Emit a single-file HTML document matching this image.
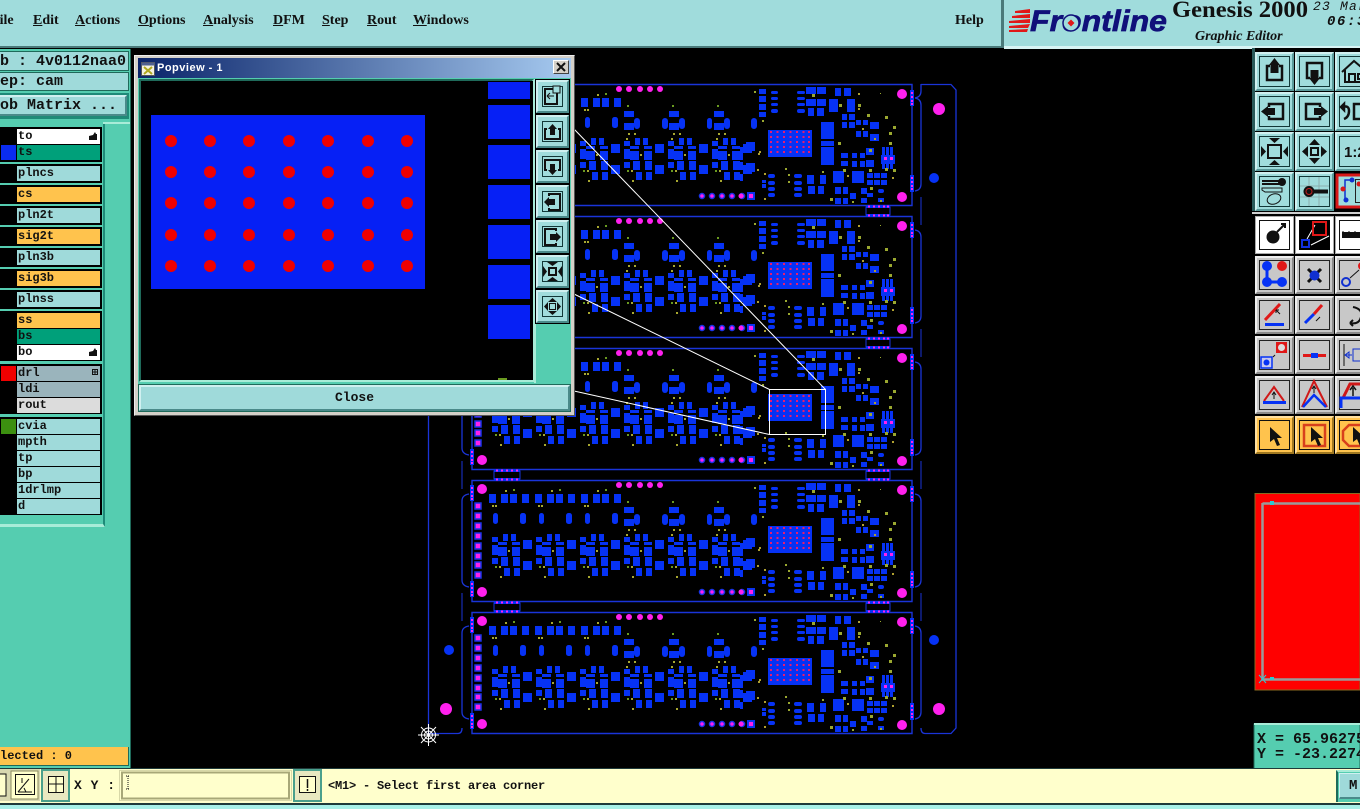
<!DOCTYPE html>
<html><head><meta charset="utf-8"><title>Genesis 2000</title>
<style>
html,body{margin:0;padding:0;background:#000;}
body{width:1360px;height:809px;position:relative;overflow:hidden;font-family:"Liberation Mono",monospace;}
.a{position:absolute;box-sizing:border-box;}
.m{position:absolute;top:12px;font:bold 14px/16px "Liberation Serif",serif;color:#111;white-space:nowrap;}
.m u{text-decoration:underline;}
.l{position:absolute;left:17px;width:82px;height:15px;background:#9fdada;font:bold 12px/14px "Liberation Mono",monospace;color:#111;padding-left:1px;white-space:nowrap;overflow:hidden;}
.g{position:absolute;left:0;width:102px;background:#000;}
.y{background:#ffc34d}.gr{background:#00a07a}.w{background:#fff}.s{background:#9ab4bc}.c{background:#dcdcdc}
.t{position:absolute;white-space:pre;font-weight:bold;color:#111;}
</style></head><body>

<!-- PCB canvas -->
<svg class="a" style="left:0;top:0" width="1360" height="809" viewBox="0 0 1360 809">
<defs>
<g id="cl" fill="#0632f5">
<rect x="492" y="57" width="6" height="5"/><rect x="503" y="54" width="5" height="7"/><rect x="511" y="54" width="5" height="7"/>
<rect x="492" y="65" width="6" height="10"/><rect x="498" y="62" width="9" height="3"/><rect x="498" y="67" width="9" height="9"/>
<rect x="512" y="62" width="8" height="3"/><rect x="512" y="67" width="8" height="9"/>
<rect x="492" y="78" width="6" height="6"/><rect x="501" y="77" width="7" height="9"/><rect x="513" y="77" width="7" height="9"/>
<rect x="523" y="60" width="9" height="9"/><rect x="523" y="81" width="9" height="9"/>
<rect x="504" y="88" width="6" height="8"/><rect x="514" y="88" width="6" height="8"/>
<rect x="508" y="70" width="2" height="2" fill="#a8a830"/><rect x="499" y="86" width="2" height="2" fill="#a8a830"/><rect x="495" y="86" width="2" height="2" fill="#6a9a20"/><rect x="500" y="96" width="2" height="2" fill="#a8a830"/>
</g>
<g id="r4" fill="#0632f5">
<rect x="489" y="14" width="7" height="9"/><rect x="501" y="14" width="7" height="9"/><rect x="510" y="14" width="7" height="9"/><rect x="522" y="14" width="7" height="9"/>
<rect x="493" y="33" width="5" height="11" rx="2.5"/><rect x="520" y="33" width="6" height="11" rx="2.5"/>
<rect x="492" y="25" width="2" height="2" fill="#a8a830"/><rect x="505" y="10" width="2" height="2" fill="#a8a830"/><rect x="513" y="9" width="2" height="2" fill="#6a9a20"/><rect x="495" y="25" width="2" height="2" fill="#a8a830"/>
</g>
<g id="o3" fill="#0632f5">
<rect x="624" y="27" width="10" height="6"/><rect x="624" y="39" width="10" height="7"/><rect x="634" y="34" width="6" height="11" rx="3"/>
<rect x="627" y="21" width="2" height="2" fill="#6a9a20"/><rect x="628" y="49" width="2" height="2" fill="#a8a830"/><rect x="634" y="49" width="2" height="2" fill="#a8a830"/>
<rect x="626" y="54" width="2" height="2" fill="#a8a830"/>
</g>
<g id="br">
<path d="M866 122.500V131.500M890 122.500V131.500M494 122.500V131.500M520 122.500V131.500" stroke="#1a34d8" fill="none"/>
<g fill="#0632f5"><rect x="866" y="121" width="24" height="3"/><rect x="866" y="130" width="24" height="3"/><rect x="494" y="121" width="26" height="3"/><rect x="494" y="130" width="26" height="3"/></g>
<path fill="#ff20ee" d="M868 121.500h2v2h-2zM873 121.500h2v2h-2zM878 121.500h2v2h-2zM883 121.500h2v2h-2zM887 121.500h2v2h-2zM868 130.500h2v2h-2zM873 130.500h2v2h-2zM878 130.500h2v2h-2zM883 130.500h2v2h-2zM887 130.500h2v2h-2z"/>
<path fill="#ff20ee" d="M496 121.500h2v2h-2zM501 121.500h2v2h-2zM506 121.500h2v2h-2zM511 121.500h2v2h-2zM516 121.500h2v2h-2zM496 130.500h2v2h-2zM501 130.500h2v2h-2zM506 130.500h2v2h-2zM511 130.500h2v2h-2zM516 130.500h2v2h-2z"/>
</g>
<g id="p">
<path d="M472 .5H912V121.500H472Z" fill="none" stroke="#1a34d8" stroke-width="1.400"/>
<g fill="#0632f5">
<rect x="759" y="5" width="7" height="5"/><rect x="759" y="12" width="7" height="6"/><rect x="759" y="20" width="7" height="6"/><rect x="759" y="28" width="7" height="5"/>
<rect x="771" y="7" width="7" height="3" rx="1.5"/><rect x="771" y="13" width="7" height="3" rx="1.5"/><rect x="771" y="19" width="7" height="3" rx="1.5"/><rect x="771" y="25" width="7" height="4" rx="2"/>
<rect x="797" y="7" width="8" height="3" rx="1.5"/><rect x="797" y="13" width="8" height="3" rx="1.5"/><rect x="797" y="19" width="8" height="3" rx="1.5"/><rect x="797" y="25" width="8" height="4" rx="2"/>
<rect x="806" y="3" width="10" height="7"/><rect x="817" y="3" width="9" height="7"/><rect x="806" y="15" width="10" height="7"/><rect x="817" y="15" width="9" height="7"/>
<rect x="808" y="24" width="6" height="8"/><rect x="817" y="24" width="7" height="8"/>
<rect x="835" y="4" width="6" height="8"/><rect x="844" y="4" width="7" height="8"/>
<rect x="829" y="15" width="9" height="13"/><rect x="847" y="15" width="8" height="13"/>
<rect x="842" y="30" width="5" height="6"/><rect x="849" y="30" width="6" height="6"/><rect x="842" y="38" width="5" height="6"/><rect x="849" y="38" width="6" height="6"/>
<rect x="856" y="36" width="5" height="5"/><rect x="863" y="36" width="5" height="5"/><rect x="870" y="38" width="9" height="7"/>
<rect x="856" y="47" width="5" height="6"/><rect x="863" y="47" width="5" height="6"/><rect x="870" y="50" width="9" height="7"/>
<rect x="821" y="38" width="13" height="17"/><rect x="821" y="57" width="13" height="5"/><rect x="821" y="63" width="13" height="18"/>
<rect x="751" y="34" width="6" height="11" rx="3"/><rect x="746" y="58" width="9" height="9"/><rect x="746" y="79" width="9" height="9"/>
<rect x="740" y="63" width="3" height="13"/><rect x="740" y="78" width="3" height="8"/><rect x="740" y="90" width="3" height="7"/>
<rect x="881" y="71" width="14" height="9"/><rect x="882" y="63" width="3" height="8"/><rect x="886" y="63" width="3" height="8"/><rect x="890" y="63" width="3" height="8"/><rect x="882" y="80" width="3" height="5"/><rect x="886" y="80" width="3" height="5"/><rect x="890" y="80" width="3" height="5"/>
<rect x="866" y="64" width="8" height="7"/><rect x="841" y="69" width="7" height="5"/><rect x="841" y="77" width="7" height="5"/>
<rect x="852" y="69" width="5" height="5"/><rect x="860" y="69" width="5" height="5"/><rect x="852" y="77" width="5" height="6"/><rect x="860" y="77" width="5" height="6"/><rect x="866" y="76" width="8" height="7"/>
<rect x="833" y="87" width="11" height="12"/><rect x="852" y="87" width="12" height="12"/>
<rect x="867" y="89" width="6" height="5"/><rect x="874" y="89" width="6" height="5"/><rect x="881" y="89" width="6" height="5"/><rect x="867" y="96" width="6" height="5"/><rect x="874" y="96" width="6" height="5"/><rect x="881" y="96" width="6" height="5"/>
<rect x="807" y="91" width="7" height="9"/><rect x="820" y="91" width="6" height="9"/><rect x="808" y="102" width="7" height="8"/><rect x="818" y="102" width="6" height="8"/>
<rect x="768" y="90" width="7" height="4" rx="2"/><rect x="768" y="97" width="7" height="4" rx="2"/><rect x="768" y="103" width="7" height="4" rx="2"/><rect x="768" y="109" width="7" height="4" rx="2"/>
<rect x="794" y="90" width="8" height="4" rx="2"/><rect x="794" y="97" width="8" height="4" rx="2"/><rect x="794" y="103" width="8" height="4" rx="2"/><rect x="794" y="109" width="8" height="4" rx="2"/>
<rect x="762" y="96" width="4" height="3"/><rect x="762" y="100" width="4" height="4"/>
<rect x="835" y="103" width="6" height="7"/><rect x="843" y="103" width="5" height="7"/><rect x="835" y="114" width="6" height="6"/><rect x="843" y="114" width="5" height="6"/>
<rect x="850" y="109" width="6" height="6"/><rect x="861" y="104" width="6" height="6"/><rect x="861" y="114" width="6" height="5"/><rect x="867" y="109" width="6" height="4"/>
<rect x="878" y="105" width="6" height="4" rx="2"/><rect x="878" y="114" width="6" height="4"/>
<rect x="747" y="108" width="8" height="8"/><rect x="768" y="46" width="44" height="27"/>
<rect x="470" y="5" width="4" height="16"/><rect x="470" y="101" width="4" height="16"/>
<rect x="910" y="6" width="4" height="16"/><rect x="910" y="91" width="4" height="17"/>
</g>
<!-- BGA dots -->
<g fill="#e81c70">
<path d="M770 47h2v2h-2zM776.500 47h2v2h-2zM783 47h2v2h-2zM789.500 47h2v2h-2zM796 47h2v2h-2zM802.500 47h2v2h-2zM808 47h2v2h-2z"/>
<path d="M770 52h2v2h-2zM776.500 52h2v2h-2zM783 52h2v2h-2zM789.500 52h2v2h-2zM796 52h2v2h-2zM802.500 52h2v2h-2zM808 52h2v2h-2z"/>
<path d="M770 57h2v2h-2zM776.500 57h2v2h-2zM783 57h2v2h-2zM789.500 57h2v2h-2zM796 57h2v2h-2zM802.500 57h2v2h-2zM808 57h2v2h-2z"/>
<path d="M770 62h2v2h-2zM776.500 62h2v2h-2zM783 62h2v2h-2zM789.500 62h2v2h-2zM796 62h2v2h-2zM802.500 62h2v2h-2zM808 62h2v2h-2z"/>
<path d="M770 67h2v2h-2zM776.500 67h2v2h-2zM783 67h2v2h-2zM789.500 67h2v2h-2zM796 67h2v2h-2zM802.500 67h2v2h-2zM808 67h2v2h-2z"/>
</g>
<!-- clusters -->
<use href="#cl"/><use href="#cl" x="44"/><use href="#cl" x="88"/><use href="#cl" x="132"/><use href="#cl" x="176"/><use href="#cl" x="220"/>
<use href="#r4"/><use href="#r4" x="46"/><use href="#r4" x="92"/>
<use href="#o3"/><use href="#o3" x="45"/><use href="#o3" x="90"/>
<g fill="#0632f5"><rect x="662" y="34" width="6" height="11" rx="3"/><rect x="707" y="34" width="5" height="11" rx="2.500"/></g>
<!-- magenta -->
<g fill="#ff20ee">
<circle cx="619" cy="5" r="3"/><circle cx="629" cy="5" r="3"/><circle cx="640" cy="5" r="3"/><circle cx="650" cy="5" r="3"/><circle cx="660" cy="5" r="3"/>
<circle cx="902" cy="10" r="5"/><circle cx="902" cy="113" r="5"/><circle cx="482" cy="9" r="5"/><circle cx="482" cy="112" r="5"/>
</g>
<g fill="#ff20ee" stroke="#1a34e8" stroke-width="1.500">
<circle cx="702" cy="112" r="2.500"/><circle cx="712" cy="112" r="2.500"/><circle cx="722" cy="112" r="2.500"/><circle cx="732" cy="112" r="2.500"/><circle cx="742" cy="112" r="2.500"/><circle cx="751" cy="112" r="2.500"/>
<rect x="475" y="23" width="6" height="6"/><rect x="475" y="33" width="6" height="6"/><rect x="475" y="43" width="6" height="6"/><rect x="475" y="53" width="6" height="6"/><rect x="475" y="63" width="6" height="6"/><rect x="475" y="73" width="6" height="6"/><rect x="475" y="82" width="6" height="6"/><rect x="475" y="92" width="6" height="6"/>
</g>
<g fill="#ff20ee">
<path d="M471 7h2v2h-2zM471 11h2v2h-2zM471 15h2v2h-2zM471 18h2v2h-2zM471 103h2v2h-2zM471 107h2v2h-2zM471 111h2v2h-2zM471 114h2v2h-2z"/>
<path d="M911 8h2v2h-2zM911 12h2v2h-2zM911 16h2v2h-2zM911 19h2v2h-2zM911 93h2v2h-2zM911 97h2v2h-2zM911 101h2v2h-2zM911 104h2v2h-2z"/>
<path d="M884 73h3v3h-3zM890 73h3v3h-3zM749 110h4v4h-4z"/>
</g>
<circle cx="741" cy="112" r="2.500" fill="#ff20ee"/>
<!-- olive dots -->
<g fill="#9aa830">
<path d="M754 7h2v2h-2zM762 36h2v2h-2zM812 10h3v3h-3zM839 20h3v3h-3zM858 20h3v3h-3zM867 30h3v3h-3zM885 32h3v3h-3zM893 42h3v3h-3zM889 48h3v3h-3zM889 58h3v3h-3zM869 65h3v3h-3zM838 58h3v3h-3zM880 9h1v1h-1zM843 85h3v3h-3zM869 85h3v3h-3zM885 84h3v3h-3zM893 85h3v3h-3zM785 84h2v2h-2zM822 87h2v2h-2zM788 90h2v2h-2zM788 97h2v2h-2zM870 103h3v3h-3zM830 114h3v3h-3zM852 117h2v2h-2zM880 116h2v2h-2z"/>
<path d="M759 67h2v2h-2zM757 85h2v2h-2zM764 89h2v2h-2zM764 114h2v2h-2zM858 24h2v2h-2zM862 44h2v2h-2zM874 54h2v2h-2zM892 93h2v2h-2zM847 91h2v2h-2zM858 9h2v2h-2zM758 69h2v2h-2z" fill="#b0a030"/>
</g>
</g>
</defs>
<rect width="1360" height="809" fill="#000"/>
<use href="#p" y="84"/><use href="#p" y="216"/><use href="#p" y="348"/><use href="#p" y="480"/><use href="#p" y="612"/>
<use href="#br" y="84"/><use href="#br" y="216"/><use href="#br" y="348"/><use href="#br" y="480"/>
<!-- outline -->
<g fill="none" stroke="#1a34d8" stroke-width="1.300">
<path d="M428.500 84V733.500H458Q462 733.500 462 728M921 728Q921 733.500 925 733.500H951L956 728V90L951 84.500H921"/>
<path d="M921 84V91Q921 97 915 98"/>
<path d="M462 105V184Q462 190 469 191M462 105Q462 99 469 98M462 237V316Q462 322 469 323M462 237Q462 231 469 230M462 369V448Q462 454 469 455M462 369Q462 363 469 362M462 501V580Q462 586 469 587M462 501Q462 495 469 494M462 633V712Q462 718 469 719M462 633Q462 627 469 626"/>
<path d="M921 105V184Q921 190 915 191M921 105Q921 99 915 98M921 237V316Q921 322 915 323M921 237Q921 231 915 230M921 369V448Q921 454 915 455M921 369Q921 363 915 362M921 501V580Q921 586 915 587M921 501Q921 495 915 494M921 633V712Q921 718 915 719M921 633Q921 627 915 626"/>
<path d="M921 197V225M921 329V357M921 461V489M921 593V621M462 197V225M462 329V357M462 461V489M462 593V621" stroke-width="1"/>
</g>
<circle cx="939" cy="109" r="6" fill="#ff20ee"/><circle cx="939" cy="709" r="6" fill="#ff20ee"/><circle cx="446" cy="709" r="6" fill="#ff20ee"/>
<circle cx="934" cy="178" r="5" fill="#0632f5"/><circle cx="934" cy="640" r="5" fill="#0632f5"/><circle cx="449" cy="650" r="5" fill="#0632f5"/>
<!-- zoom lines -->
<g fill="none" stroke="#fff" stroke-width="1">
<rect x="769.500" y="389.500" width="56" height="45"/>
<path d="M574 129L825.500 389.500M574 294L769.500 389.500M574 391L769.500 434.500"/>
</g>
<!-- spider cursor -->
<g stroke="#fff" stroke-width="1" fill="none"><circle cx="428.500" cy="735" r="7"/><circle cx="428.500" cy="735" r="4"/><path d="M418 735H439M428.500 724V746M421 727L436 743M421 743L436 727"/></g>
</svg>

<!-- Top menu -->
<div class="a" style="left:0;top:0;width:1360px;height:48px;background:#a0dcdc;border-bottom:2px solid #4a7a7a"></div>
<div class="a" style="left:1001px;top:0;width:3px;height:48px;background:#4a7a7a"></div>
<div class="a" style="left:1004px;top:46px;width:356px;height:3px;background:#d8f4f4"></div>
<div class="m" style="left:-9px;top:13px"><u>F</u>ile</div>
<div class="m" style="left:33px;top:13px"><u>E</u>dit</div>
<div class="m" style="left:75px;top:13px"><u>A</u>ctions</div>
<div class="m" style="left:138px;top:13px"><u>O</u>ptions</div>
<div class="m" style="left:203px;top:13px"><u>A</u>nalysis</div>
<div class="m" style="left:273px;top:13px"><u>D</u>FM</div>
<div class="m" style="left:322px;top:13px"><u>S</u>tep</div>
<div class="m" style="left:367px;top:13px"><u>R</u>out</div>
<div class="m" style="left:413px;top:13px"><u>W</u>indows</div>
<div class="m" style="left:955px;top:13px">Help</div>
<svg class="a" style="left:1004px;top:0" width="356" height="46" viewBox="0 0 356 46">
<g fill="#e01818"><path d="M26 9L11 11V13H26ZM26 14L8 16V18H26ZM26 19L5 21V23H26ZM26 24L5 26V28H24ZM24 29L5 30V32H23Z"/></g>
<text x="26" y="31" font-family="Liberation Sans" font-weight="bold" font-style="italic" font-size="30" fill="#10107a" stroke="#10107a" stroke-width=".7" textLength="137" lengthAdjust="spacingAndGlyphs">Frontline</text>
<circle cx="67" cy="23" r="8" fill="#a0dcdc" stroke="#10107a" stroke-width="1.500"/>
<path d="M67 19.500L70.500 23 67 26.500 63.500 23Z" fill="#e01818"/>
<text x="168" y="17" font-family="Liberation Serif" font-weight="bold" font-size="23" fill="#111" textLength="136" lengthAdjust="spacingAndGlyphs">Genesis 2000</text>
<text x="191" y="40" font-family="Liberation Serif" font-weight="bold" font-style="italic" font-size="14" fill="#111">Graphic Editor</text>
<text x="309" y="10" font-family="Liberation Mono" font-style="italic" font-size="13" fill="#111" letter-spacing="1.200">23 Mar</text>
<text x="323" y="25" font-family="Liberation Mono" font-style="italic" font-weight="bold" font-size="14" fill="#111" letter-spacing="1.600">06:38</text>
</svg>

<!-- Left panel -->
<div class="a" style="left:0;top:49px;width:131px;height:721px;background:#55cdb0;border-right:1px solid #1f6a5a"></div>
<div class="a" style="left:0;top:51px;width:129px;height:20px;background:#9fdada;border:1px solid #1f6a5a;border-left:0"></div>
<div class="a" style="left:0;top:72px;width:129px;height:19px;background:#9fdada;border:1px solid #1f6a5a;border-left:0"></div>
<div class="a" style="left:0;top:93px;width:129px;height:26px;background:#1f8a78"></div>
<div class="a" style="left:0;top:95px;width:127px;height:21px;background:#9fdada;border-top:2px solid #d0f0f0;border-right:2px solid #4a8a8a;border-bottom:2px solid #4a8a8a"></div>
<div class="t" style="left:0;top:53px;font-size:15px;line-height:18px">b : 4v0112naa0</div>
<div class="t" style="left:0;top:73px;font-size:15px;line-height:18px">ep: cam</div>
<div class="t" style="left:0;top:97px;font-size:15px;line-height:18px">ob Matrix ...</div>
<div class="a" style="left:0;top:122px;width:105px;height:405px;background:#55cdb0;border-right:2px solid #1f8a78;border-bottom:3px solid #a8ecd8"></div>
<div class="a" style="left:103px;top:122px;width:27px;height:2px;background:#a8ecd8"></div>

<div class="g" style="top:127px;height:35px"></div><div class="g" style="top:164px;height:19px"></div><div class="g" style="top:185px;height:19px"></div><div class="g" style="top:206px;height:19px"></div><div class="g" style="top:227px;height:19px"></div><div class="g" style="top:248px;height:19px"></div><div class="g" style="top:269px;height:19px"></div><div class="g" style="top:290px;height:19px"></div><div class="g" style="top:311px;height:50px"></div><div class="g" style="top:364px;height:50px"></div><div class="g" style="top:417px;height:98px"></div>
<div class="a" style="left:1px;top:145px;width:15px;height:15px;background:#0a2cf0"></div>
<div class="a" style="left:1px;top:366px;width:15px;height:15px;background:#f00000"></div>
<div class="a" style="left:1px;top:419px;width:15px;height:15px;background:#3c9010"></div>

<div class="l w" style="top:129px">to</div>
<div class="l gr" style="top:145px">ts</div>
<div class="l" style="top:166px">plncs</div>
<div class="l y" style="top:187px">cs</div>
<div class="l" style="top:208px">pln2t</div>
<div class="l y" style="top:229px">sig2t</div>
<div class="l" style="top:250px">pln3b</div>
<div class="l y" style="top:271px">sig3b</div>
<div class="l" style="top:292px">plnss</div>
<div class="l y" style="top:313px">ss</div>
<div class="l gr" style="top:329px">bs</div>
<div class="l w" style="top:345px">bo</div>
<div class="l s" style="top:366px">drl</div>
<div class="l s" style="top:382px">ldi</div>
<div class="l c" style="top:398px">rout</div>
<div class="l" style="top:419px">cvia</div>
<div class="l" style="top:435px">mpth</div>
<div class="l" style="top:451px">tp</div>
<div class="l" style="top:467px">bp</div>
<div class="l" style="top:483px">1drlmp</div>
<div class="l" style="top:499px">d</div>
<svg class="a" style="left:88px;top:131px" width="10" height="10" viewBox="0 0 10 10"><path d="M1 9V5L5 4 7 1 8 3 9 3V9Z" fill="#111"/></svg>
<svg class="a" style="left:88px;top:347px" width="10" height="10" viewBox="0 0 10 10"><path d="M1 9V5L5 4 7 1 8 3 9 3V9Z" fill="#111"/></svg>
<svg class="a" style="left:92px;top:369px" width="6" height="6" viewBox="0 0 6 6"><path d="M.5.5h5v5h-5zM3 0v6M0 3h6" fill="none" stroke="#111"/></svg>

<div class="a" style="left:0;top:747px;width:129px;height:19px;background:#ffc34d;border-right:1px solid #1f6a5a;border-bottom:1px solid #1f6a5a"></div>
<div class="t" style="left:0;top:748px;font-size:12px;line-height:16px">lected : 0</div>

<!-- Right toolbar -->
<svg class="a" style="left:1252px;top:48px" width="108" height="722" viewBox="1252 48 108 722" font-family="Liberation Sans">
<defs>
<g id="tb"><rect width="39" height="39" fill="#5a9a9a"/><path d="M0 39V0H39L37 2H2V37Z" fill="#d0f0f0"/><rect x="2" y="2" width="35" height="35" fill="#a0dcdc"/><rect x="4.500" y="4.500" width="30" height="30" fill="#a0dcdc" stroke="#123838"/></g>
<g id="gb"><rect width="39" height="38" fill="#8a8a8a"/><path d="M0 38V0H39L37 2H2V36Z" fill="#eeeeee"/><rect x="2" y="2" width="35" height="34" fill="#c8c8c8"/><rect x="4.500" y="4.500" width="30" height="29" fill="#c8c8c8" stroke="#222"/></g>
<g id="wb"><rect width="39" height="38" fill="#aaa"/><rect x="1" y="1" width="37" height="36" fill="#fff"/><rect x="4.500" y="4.500" width="30" height="29" fill="#fff" stroke="#111"/></g>
<g id="ob"><rect width="39" height="38" fill="#a07820"/><path d="M0 38V0H39L37 2H2V36Z" fill="#ffe0a0"/><rect x="2" y="2" width="35" height="34" fill="#ffc34d"/><rect x="4.500" y="4.500" width="30" height="29" fill="#ffc34d" stroke="#111"/></g>
<g id="ic-up" fill="none" stroke="#111" stroke-width="2.500"><path d="M15 14H12V28H27V14H24"/><path d="M19.500 6L25 13H23.500V21H15.500V13H14Z" fill="#111" stroke="none"/></g>
<g id="ic-dn" fill="none" stroke="#111" stroke-width="2.500"><path d="M15 26H12V11H27V26H24"/><path d="M19.500 33L25 26H23.500V18H15.500V26H14Z" fill="#111" stroke="none"/></g>
<g id="ic-lf" fill="none" stroke="#111" stroke-width="2.500"><path d="M14 15V12H28V27H14V24"/><path d="M6 19.500L13 14V16H20V23H13V25Z" fill="#111" stroke="none"/></g>
<g id="ic-rt" fill="none" stroke="#111" stroke-width="2.500"><path d="M25 15V12H11V27H25V24"/><path d="M33 19.500L26 14V16H19V23H26V25Z" fill="#111" stroke="none"/></g>
<g id="ic-fit"><rect x="13" y="13" width="13" height="13" fill="none" stroke="#111" stroke-width="2"/><path d="M19.500 11L14 6H25ZM19.500 28L14 33H25ZM11 19.500L6 14V25ZM28 19.500L33 14V25Z" fill="#111"/></g>
<g id="ic-cen"><rect x="16" y="16" width="7" height="7" fill="none" stroke="#111" stroke-width="2"/><path d="M19.500 7L14 13H25ZM19.500 32L14 26H25ZM7 19.500L13 14V25ZM32 19.500L26 14V25Z" fill="#111"/></g>
</defs>
<rect x="1252" y="48" width="108" height="722" fill="#000"/>
<rect x="1252" y="48" width="3" height="163" fill="#2a5a5a"/>
<rect x="1252" y="212" width="108" height="2" fill="#d0d0d0"/>
<!-- row1 -->
<g transform="translate(1255 52)"><use href="#tb"/><use href="#ic-up"/></g>
<g transform="translate(1295 52)"><use href="#tb"/><use href="#ic-dn"/></g>
<g transform="translate(1335 52)"><use href="#tb"/><path d="M7 20L19 9 32 20M10 18V30H30V18M14 30V22H20V30M23 22H28V27H23ZM27 8l3 2" fill="none" stroke="#111" stroke-width="2"/></g>
<g transform="translate(1255 92)"><use href="#tb"/><use href="#ic-lf"/></g>
<g transform="translate(1295 92)"><use href="#tb"/><use href="#ic-rt"/></g>
<g transform="translate(1335 92)"><use href="#tb"/><path d="M8 15Q14 13 14 19T9 27M6 15L9 12V18Z" fill="none" stroke="#111" stroke-width="2.500"/><path d="M31 12H19V27H31" fill="none" stroke="#111" stroke-width="2.500"/></g>
<g transform="translate(1255 132)"><use href="#tb"/><use href="#ic-fit"/></g>
<g transform="translate(1295 132)"><use href="#tb"/><use href="#ic-cen"/></g>
<g transform="translate(1335 132)"><use href="#tb"/><text x="9" y="25" font-size="15" font-weight="bold" font-family="Liberation Sans" fill="#111">1:2</text></g>
<g transform="translate(1255 172)"><use href="#tb"/><path d="M7 9H26M7 12H26" stroke="#111" stroke-width="2"/><circle cx="27" cy="10" r="4" fill="#111"/><path d="M7 16H27V20H10L7 18Z" fill="#a0dcdc" stroke="#111"/><ellipse cx="19" cy="27" rx="7" ry="5" fill="none" stroke="#111" transform="rotate(-20 19 27)"/></g>
<g transform="translate(1295 172)"><use href="#tb"/><path d="M14 5V34M24 5V34M5 14H34M5 25H34" stroke="#8cb0b0"/><rect x="18" y="17.500" width="15" height="4" fill="#111"/><circle cx="14" cy="19.500" r="5.500" fill="#111"/><circle cx="14" cy="19.500" r="3" fill="none" stroke="#c02020"/></g>
<g transform="translate(1335 172)"><rect width="25" height="38" fill="#000"/><rect x="2" y="3" width="40" height="32" fill="#a0dcdc" stroke="#d81818" stroke-width="3"/><path d="M17 8H10V17M10 17V28" stroke="#1030d0" stroke-width="1.500" fill="none"/><circle cx="17" cy="8" r="2.500" fill="#1030d0"/><circle cx="8" cy="17" r="2.500" fill="#d81818"/><circle cx="11" cy="28" r="2.500" fill="#1030d0"/><rect x="20.500" y="7.500" width="8" height="23" fill="none" stroke="#222"/><circle cx="24" cy="12" r="2.500" fill="#d81818"/></g>
<!-- white row -->
<g transform="translate(1255 216)"><use href="#wb"/><circle cx="18" cy="21" r="6.500" fill="#111"/><path d="M22 16L30 8M26 8H30V12" stroke="#111" stroke-width="2" fill="none"/></g>
<g transform="translate(1295 216)"><rect width="39" height="38" fill="#aaa"/><rect x="1" y="1" width="37" height="36" fill="#fff"/><rect x="4" y="4" width="31" height="30" fill="#000"/><path d="M12 23L20 9M16 29L34 20" stroke="#fff"/><rect x="18" y="6" width="13" height="13" fill="none" stroke="#e01818" stroke-width="2"/><rect x="7" y="24" width="7" height="7" fill="none" stroke="#1030e0" stroke-width="2"/></g>
<g transform="translate(1335 216)"><use href="#wb"/><rect x="7" y="16" width="25" height="6" fill="#111"/><path d="M8 13V16M11 14V16M14 13V16M17 14V16M20 13V16M23 14V16" stroke="#111" transform="translate(0 2)"/></g>
<!-- gray rows -->
<g transform="translate(1255 256)"><use href="#gb"/><path d="M12 10V26H27" stroke="#0632f5" stroke-width="3" fill="none"/><circle cx="12" cy="10" r="5" fill="#0632f5"/><circle cx="12" cy="26" r="5" fill="#0632f5"/><circle cx="27" cy="26" r="5" fill="#0632f5"/><circle cx="27" cy="10" r="5" fill="#e01818"/></g>
<g transform="translate(1295 256)"><use href="#gb"/><path d="M13 13L26 26M26 13L13 26" stroke="#111" stroke-width="3"/><circle cx="19.500" cy="19.500" r="5" fill="#1030d0"/></g>
<g transform="translate(1335 256)"><use href="#gb"/><circle cx="11" cy="26" r="4" fill="none" stroke="#1030d0" stroke-width="2"/><path d="M15 22L24 14" stroke="#111"/><circle cx="27" cy="10" r="4" fill="#e01818"/></g>
<g transform="translate(1255 296)"><use href="#gb"/><path d="M10 24L25 8" stroke="#e01818" stroke-width="3"/><rect x="10" y="27" width="19" height="3" fill="#0632f5"/><path d="M25 18L21 14M21 14V17M21 14H24" stroke="#111"/></g>
<g transform="translate(1295 296)"><use href="#gb"/><path d="M10 27L19 18" stroke="#0632f5" stroke-width="3"/><path d="M19 18L27 9" stroke="#e01818" stroke-width="3"/><path d="M21 25L25 21" stroke="#111"/></g>
<g transform="translate(1335 296)"><use href="#gb"/><path d="M18 11Q28 13 26 21T15 27M15 27L18 24M15 27L18 30" fill="none" stroke="#111" stroke-width="2"/></g>
<g transform="translate(1255 336)"><use href="#gb"/><rect x="21" y="6" width="11" height="11" fill="#e01818"/><circle cx="26.500" cy="11.500" r="3.500" fill="#ddd"/><rect x="6" y="21" width="11" height="11" fill="#c8c8ee" stroke="#0632f5" stroke-width="1.500"/><circle cx="11.500" cy="26.500" r="3" fill="#0632f5"/><path d="M18 21L20 19" stroke="#111"/></g>
<g transform="translate(1295 336)"><use href="#gb"/><rect x="8" y="18" width="11" height="3" fill="#e01818"/><rect x="23" y="18" width="8" height="3" fill="#e01818"/><rect x="16" y="17" width="7" height="5" fill="#0632f5"/></g>
<g transform="translate(1335 336)"><use href="#gb"/><path d="M9 8V30" stroke="#111"/><path d="M10 19H17" stroke="#1030d0"/><path d="M18 13H27V25H18ZM10 19L14 16V22Z" fill="none" stroke="#1030d0"/></g>
<g transform="translate(1255 376)"><use href="#gb"/><path d="M9 25L19 11 29 25" stroke="#d01818" stroke-width="2" fill="none"/><rect x="8" y="25" width="23" height="3" fill="#0632f5"/><path d="M19 17V23M17 19L19 16 21 19" stroke="#111" fill="none"/></g>
<g transform="translate(1295 376)"><use href="#gb"/><path d="M7 31L19 5 32 31" stroke="#d01818" stroke-width="2" fill="none"/><path d="M8 31L19 19 31 31" stroke="#0632f5" stroke-width="2.500" fill="none"/><path d="M19 11V17M17 13L19 10 21 13" stroke="#111" fill="none"/></g>
<g transform="translate(1335 376)"><use href="#gb"/><path d="M8 22L15 8H29L36 22" stroke="#d01818" stroke-width="3" fill="none"/><path d="M6 32V22H38" stroke="#0632f5" stroke-width="3" fill="none"/><path d="M18 20V12M15 14L18 10 21 14" stroke="#111" stroke-width="1.500" fill="none"/></g>
<g transform="translate(1255 416)"><use href="#ob"/><path id="arrow" d="M15 11V26L19 23 22 30 25 29 22 22 27 22Z" fill="#111"/></g>
<g transform="translate(1295 416)"><use href="#ob"/><rect x="9" y="9" width="21" height="21" fill="none" stroke="#d8401c" stroke-width="2.500"/><use href="#arrow" x="1"/></g>
<g transform="translate(1335 416)"><use href="#ob"/><path d="M14 9H30V30H14L8 24V15Z" fill="none" stroke="#d8401c" stroke-width="2.500"/><use href="#arrow" x="3"/></g>
<!-- red map -->
<rect x="1255" y="493.500" width="105" height="196.500" fill="#ff0000" stroke="#8a6a20"/>
<path d="M1262.500 503.500H1360M1262.500 503V679.500H1360" fill="none" stroke="#9a9a9a" stroke-width="2.500"/>
<path d="M1270 501h4v4h-4zM1270 677h4v3h-4z" fill="#30c8d0"/>
<path d="M1259 675L1266 683M1266 675L1259 683" stroke="#30c8d0"/>
<!-- coords -->
<rect x="1254" y="724" width="106" height="45" fill="#55cdb0" stroke="#1f6a5a"/>
<rect x="1254" y="723" width="106" height="2" fill="#a8ecd8"/>
</svg>
<div class="t" style="left:1257px;top:732px;font-size:15px;line-height:15px">X = 65.96275</div>
<div class="t" style="left:1257px;top:747px;font-size:15px;line-height:15px">Y = -23.2274</div>

<!-- Bottom bar -->
<div class="a" style="left:0;top:768px;width:1360px;height:35px;background:#ffffcc;border-top:1px solid #1f3a3a"></div>
<div class="a" style="left:0;top:803px;width:1360px;height:2px;background:#1f3a3a"></div>
<div class="a" style="left:0;top:805px;width:1360px;height:4px;background:#a8f0e8"></div>
<svg class="a" style="left:0;top:769px" width="330" height="34" viewBox="0 0 330 34">
<rect x="0" y="0" width="9" height="32" fill="#d8d8b0"/><rect x="-5" y="5" width="11" height="22" fill="#ffffcc" stroke="#111"/>
<rect x="9" y="0" width="31" height="32" fill="#d8d8b0"/><rect x="11" y="2" width="27" height="28" fill="#ffffcc" stroke="#8a8a60"/><rect x="15.500" y="5.500" width="19" height="20" fill="#ffffcc" stroke="#111"/>
<path d="M18 23L29 10M18 23H32M22 9L22 14M24 19L26 23" stroke="#111" fill="none"/>
<rect x="41" y="0" width="29" height="33" fill="#4aa08c"/><rect x="43" y="2" width="25" height="29" fill="#e8e8c0"/><rect x="48.500" y="7.500" width="15" height="16" fill="#ffffcc" stroke="#111"/><path d="M48.500 15H63.500M56 7.500V23.500" stroke="#111"/>
<rect x="119.500" y="1.500" width="172" height="30" fill="#ffffcc" stroke="#d8d8a8"/><rect x="122" y="3.500" width="167" height="26" fill="#ffffcc" stroke="#a8a878" stroke-width="2"/>
<path d="M128 7V20M126 7H130M126 20H130" stroke="#111" stroke-dasharray="1 1" fill="none"/>
<rect x="293" y="0" width="29" height="33" fill="#4aa08c"/><rect x="295" y="2" width="25" height="29" fill="#e8e8c0"/><rect x="299.500" y="7.500" width="16" height="16" fill="#ffffcc" stroke="#111"/><path d="M307.500 10V19M307.500 20V22" stroke="#111" stroke-width="1.500"/>
</svg>
<div class="t" style="left:74px;top:778px;font-size:13px;line-height:16px;letter-spacing:.5px">X Y :</div>
<div class="t" style="left:328px;top:778px;font-size:12px;line-height:16px;letter-spacing:-.2px">&lt;M1&gt; - Select first area corner</div>
<div class="a" style="left:1336px;top:770px;width:24px;height:32px;background:#55cdb0;border-left:2px solid #1f6a5a;border-top:2px solid #a8ecd8"></div>
<div class="a" style="left:1339px;top:773px;width:21px;height:26px;background:#9fdada;border-left:1px solid #d0f0f0;border-top:1px solid #d0f0f0;border-bottom:2px solid #4a8a8a"></div>
<div class="t" style="left:1349px;top:778px;font-size:14px;line-height:16px">M</div>

<!-- Popview window -->
<div class="a" style="left:134px;top:55px;width:441px;height:361px;background:#d4d0c8;border:1px solid #eee;border-right-color:#555;border-bottom-color:#555"></div>
<div class="a" style="left:138px;top:58px;width:433px;height:20px;background:linear-gradient(90deg,#0a246a,#a6caf0)"></div>
<svg class="a" style="left:141px;top:62px" width="14" height="14" viewBox="0 0 14 14"><rect x=".5" y=".5" width="13" height="13" fill="#f4f2e0" stroke="#555"/><rect x=".5" y=".5" width="13" height="3" fill="#506090"/><path d="M3 5L11 12M11 5L3 12" stroke="#b0a820" stroke-width="2"/></svg>
<div class="a" style="left:157px;top:60px;color:#fff;font:bold 11px/16px 'Liberation Sans',sans-serif;letter-spacing:.5px">Popview - 1</div>
<div class="a" style="left:553px;top:60px;width:16px;height:14px;background:#d4d0c8;border:1px solid;border-color:#fff #444 #444 #fff"></div>
<svg class="a" style="left:556px;top:62px" width="10" height="10" viewBox="0 0 10 10"><path d="M1 1L9 9M9 1L1 9" stroke="#111" stroke-width="2"/></svg>

<div class="a" style="left:138px;top:78px;width:433px;height:334px;background:#55cdb0"></div>
<div class="a" style="left:139px;top:79px;width:395px;height:303px;background:#000;border:2px solid #1f6a5a;border-bottom-color:#a8ecd8;border-right-color:#a8ecd8"></div>
<div class="a" style="left:534px;top:79px;width:37px;height:304px;background:#55cdb0;border-left:2px solid #a8ecd8"></div>
<svg class="a" style="left:141px;top:81px" width="392" height="299" viewBox="141 81 392 299">
<rect x="141" y="81" width="392" height="299" fill="#000"/>
<rect x="151" y="115" width="274" height="174" fill="#0620f5"/>
<g fill="#f00000">
<circle cx="171" cy="141" r="6"/><circle cx="210" cy="141" r="6"/><circle cx="249" cy="141" r="6"/><circle cx="289" cy="141" r="6"/><circle cx="328" cy="141" r="6"/><circle cx="368" cy="141" r="6"/><circle cx="407" cy="141" r="6"/>
<circle cx="171" cy="172" r="6"/><circle cx="210" cy="172" r="6"/><circle cx="249" cy="172" r="6"/><circle cx="289" cy="172" r="6"/><circle cx="328" cy="172" r="6"/><circle cx="368" cy="172" r="6"/><circle cx="407" cy="172" r="6"/>
<circle cx="171" cy="203" r="6"/><circle cx="210" cy="203" r="6"/><circle cx="249" cy="203" r="6"/><circle cx="289" cy="203" r="6"/><circle cx="328" cy="203" r="6"/><circle cx="368" cy="203" r="6"/><circle cx="407" cy="203" r="6"/>
<circle cx="171" cy="235" r="6"/><circle cx="210" cy="235" r="6"/><circle cx="249" cy="235" r="6"/><circle cx="289" cy="235" r="6"/><circle cx="328" cy="235" r="6"/><circle cx="368" cy="235" r="6"/><circle cx="407" cy="235" r="6"/>
<circle cx="171" cy="266" r="6"/><circle cx="210" cy="266" r="6"/><circle cx="249" cy="266" r="6"/><circle cx="289" cy="266" r="6"/><circle cx="328" cy="266" r="6"/><circle cx="368" cy="266" r="6"/><circle cx="407" cy="266" r="6"/>
</g>
<g fill="#0620f5"><rect x="488" y="82" width="42" height="17"/><rect x="488" y="105" width="42" height="34"/><rect x="488" y="145" width="42" height="34"/><rect x="488" y="185" width="42" height="34"/><rect x="488" y="225" width="42" height="34"/><rect x="488" y="265" width="42" height="34"/><rect x="488" y="305" width="42" height="34"/></g>
<rect x="498" y="378" width="9" height="2" fill="#6a9a20"/>
</svg>
<svg class="a" style="left:535px;top:79px" width="36" height="246" viewBox="0 0 36 246">
<defs><g id="pb"><rect x="0" y="0" width="35" height="35" fill="#000"/><rect x="1" y="1" width="33" height="33" fill="#4a8a8a"/><path d="M1 34V1H34L32 3H3V32Z" fill="#d0f0f0"/><rect x="3" y="3" width="29" height="29" fill="#a0dcdc"/><rect x="7.500" y="7.500" width="20" height="20" fill="#a0dcdc" stroke="#123838"/></g></defs>
<g><use href="#pb"/><rect x="10" y="10" width="12" height="15" fill="#a0dcdc" stroke="#111" stroke-width="2"/><rect x="18" y="7" width="7" height="7" fill="#a0dcdc" stroke="#111"/><path d="M12 17H19M12 17L15 14M12 17L15 20" stroke="#111" fill="none"/></g>
<g transform="translate(0 35)"><use href="#pb"/><path d="M12 15H10V25H25V15H23" fill="none" stroke="#111" stroke-width="2"/><path d="M17.500 10L22 15H20V21H15V15H13Z" fill="#111"/></g>
<g transform="translate(0 70)"><use href="#pb"/><path d="M12 21H10V11H25V21H23" fill="none" stroke="#111" stroke-width="2"/><path d="M17.500 26L22 21H20V15H15V21H13Z" fill="#111"/></g>
<g transform="translate(0 105)"><use href="#pb"/><path d="M14 12V10H25V26H14V24" fill="none" stroke="#111" stroke-width="2"/><path d="M9 18L14 13V15H20V21H14V23Z" fill="#111"/></g>
<g transform="translate(0 140)"><use href="#pb"/><path d="M21 12V10H10V26H21V24" fill="none" stroke="#111" stroke-width="2"/><path d="M26 18L21 13V15H15V21H21V23Z" fill="#111"/></g>
<g transform="translate(0 175)"><use href="#pb"/><rect x="14" y="14" width="7" height="7" fill="none" stroke="#111" stroke-width="2"/><path d="M17.500 12L12 8H23ZM17.500 23L12 27H23ZM12 17.500L8 12V23ZM23 17.500L27 12V23Z" fill="#111"/></g>
<g transform="translate(0 210)"><use href="#pb"/><rect x="14.500" y="14.500" width="6" height="6" fill="none" stroke="#111"/><path d="M17.500 9L13 13H22ZM17.500 26L13 22H22ZM9 17.500L13 13V22ZM26 17.500L22 13V22Z" fill="#111"/></g>
</svg>
<div class="a" style="left:139px;top:385px;width:431px;height:26px;background:#9fdada;border:2px solid;border-color:#d0f0f0 #4a8a8a #4a8a8a #d0f0f0;outline:1px solid #1f6a5a;text-align:center;font:bold 13px/22px 'Liberation Mono',monospace;color:#111">Close</div>
</body></html>
